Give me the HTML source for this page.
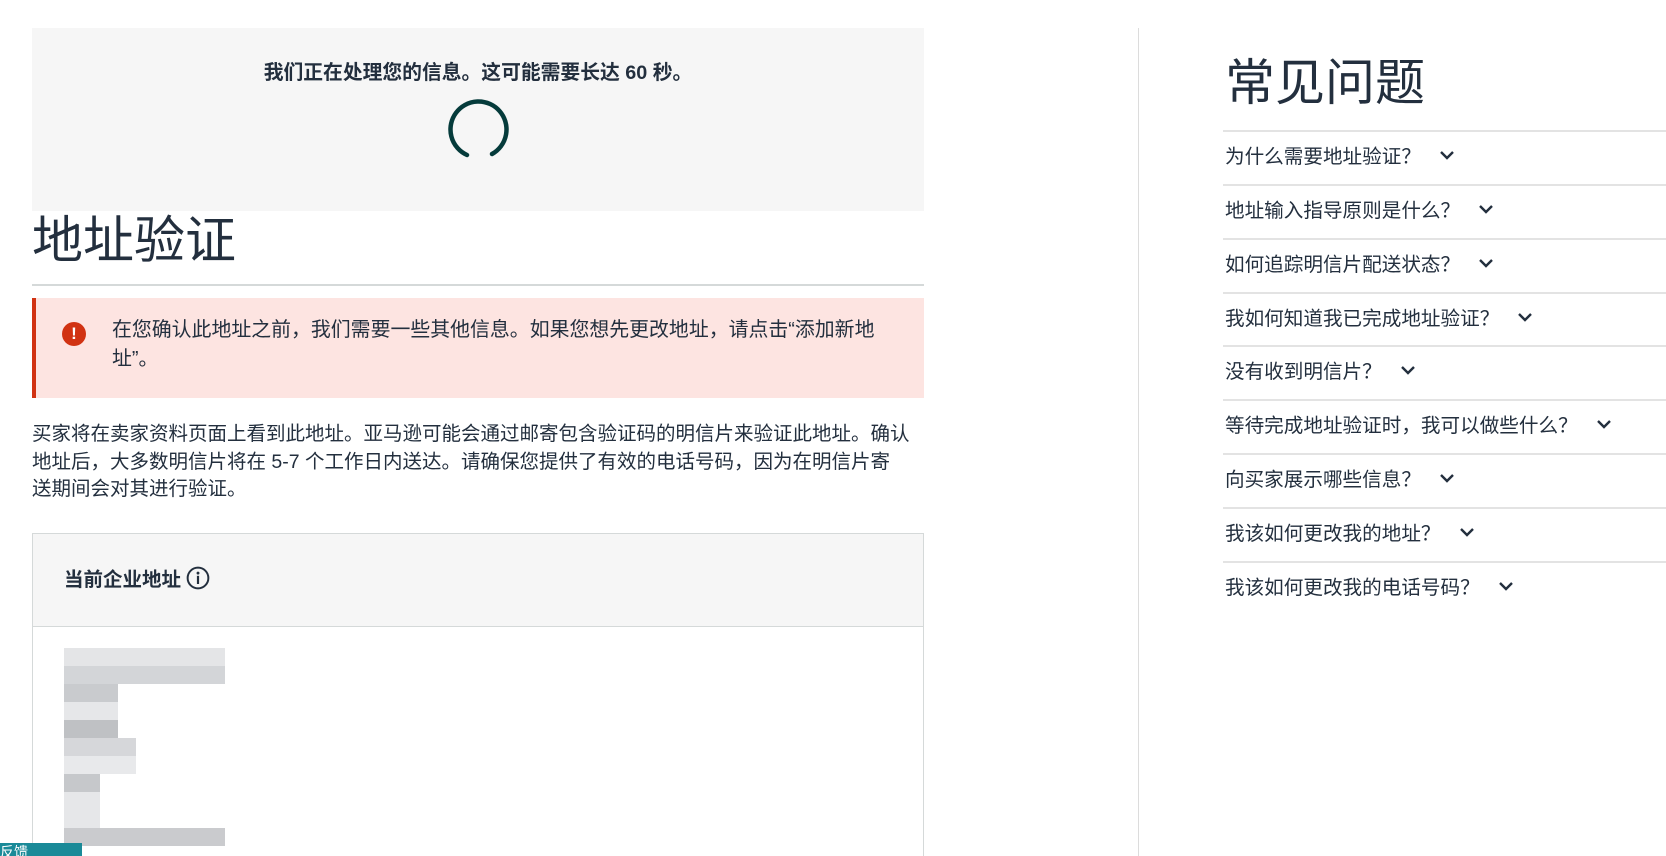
<!DOCTYPE html>
<html style="overflow:hidden;width:1666px;height:856px"><head><meta charset="utf-8"><style>
*{margin:0;padding:0;box-sizing:border-box}
body{width:1666px;height:856px;overflow:hidden;background:#fff;font-family:"Liberation Sans","Noto Sans CJK SC",sans-serif;color:#232f3e;position:relative}
.abs{position:absolute}
.load{left:32px;top:28px;width:892px;height:183px;background:#f6f6f6}
.load p{position:absolute;top:28px;width:100%;text-align:center;font-weight:bold;font-size:19.8px}
h1{position:absolute;left:32px;top:206px;font-size:51px;font-weight:normal;line-height:70px}
.hr{left:32px;top:284px;width:892px;height:2px;background:#d5d9d9}
.alert{left:32px;top:298px;width:892px;height:100px;background:#fde4e1;border-left:4px solid #d13212}
.alert .t{position:absolute;left:76px;top:18px;font-size:19.9px;line-height:29px;width:800px}
.ico{left:62px;top:322px;width:24px;height:24px;border-radius:50%;background:#d13212;color:#fff;font-weight:bold;font-size:17px;text-align:center;line-height:24px}
.para{left:32px;top:421px;width:900px;font-size:19.5px;line-height:27.5px;white-space:nowrap}
.card{left:32px;top:533px;width:892px;height:323px;border:1px solid #d5d9d9;border-bottom:none}
.card .hd{height:93px;background:#f6f6f6;border-bottom:1px solid #d5d9d9;padding:29px 0 0 31px;font-weight:bold;font-size:19.5px}
.vl{left:1138px;top:28px;width:1px;height:828px;background:#dcdcdc}
.faqh{left:1225px;top:48px;font-size:50px;line-height:70px}
.faq{left:1223px;width:443px;height:54px;border-top:2px solid #e3e3e3;font-size:19.6px;line-height:50px;padding-left:2px}
.faq svg{margin-left:18px;vertical-align:middle;position:relative;top:-3px}
.blk{position:absolute}
</style></head><body>
<div class="abs load"><p>我们正在处理您的信息。这可能需要长达 60 秒。</p>
<svg style="position:absolute;left:414px;top:70px" width="64" height="64" viewBox="0 0 64 64"><path d="M21 57 A28 28 0 1 1 46 56" fill="none" stroke="#053b3b" stroke-width="4.5" stroke-linecap="round"/></svg>
</div>
<h1>地址验证</h1>
<div class="abs hr"></div>
<div class="abs alert"><div class="t">在您确认此地址之前，我们需要一些其他信息。如果您想先更改地址，请点击“添加新地<br>址”。</div></div>
<div class="abs ico">!</div>
<div class="abs para">买家将在卖家资料页面上看到此地址。亚马逊可能会通过邮寄包含验证码的明信片来验证此地址。确认<br>地址后，大多数明信片将在 5-7 个工作日内送达。请确保您提供了有效的电话号码，因为在明信片寄<br>送期间会对其进行验证。</div>
<div class="abs card"><div class="hd">当前企业地址 <svg width="24" height="24" viewBox="0 0 22 22" style="vertical-align:-4px"><circle cx="11" cy="11" r="9.5" fill="none" stroke="#232f3e" stroke-width="1.8"/><circle cx="11" cy="6.5" r="1.3" fill="#232f3e"/><rect x="10" y="9" width="2" height="7.5" fill="#232f3e"/></svg></div></div>
<div class="blk" style="left:64px;top:648px;width:161px;height:18px;background:#e4e5e7"></div>
<div class="blk" style="left:64px;top:666px;width:161px;height:18px;background:#d3d5d8"></div>
<div class="blk" style="left:64px;top:684px;width:54px;height:18px;background:#c9cbce"></div>
<div class="blk" style="left:64px;top:702px;width:54px;height:18px;background:#e6e7e9"></div>
<div class="blk" style="left:64px;top:720px;width:54px;height:18px;background:#bfc1c4"></div>
<div class="blk" style="left:64px;top:738px;width:72px;height:18px;background:#d6d7da"></div>
<div class="blk" style="left:64px;top:756px;width:72px;height:18px;background:#e8e9eb"></div>
<div class="blk" style="left:64px;top:774px;width:36px;height:18px;background:#c6c8cb"></div>
<div class="blk" style="left:64px;top:792px;width:36px;height:36px;background:#e6e7e9"></div>
<div class="blk" style="left:64px;top:828px;width:161px;height:18px;background:#cacbce"></div>
<div class="blk" style="left:0;top:843px;width:82px;height:13px;background:#1a8a98;color:#fff;font-size:14px;line-height:18px;overflow:hidden">反馈</div>
<div class="abs vl"></div>
<div class="abs faqh">常见问题</div>
<div class="abs faq" style="top:130px">为什么需要地址验证？<svg width="16" height="10" viewBox="0 0 16 10"><path d="M2 2 L8 8 L14 2" fill="none" stroke="#232f3e" stroke-width="2.4"/></svg></div>
<div class="abs faq" style="top:184px">地址输入指导原则是什么？<svg width="16" height="10" viewBox="0 0 16 10"><path d="M2 2 L8 8 L14 2" fill="none" stroke="#232f3e" stroke-width="2.4"/></svg></div>
<div class="abs faq" style="top:238px">如何追踪明信片配送状态？<svg width="16" height="10" viewBox="0 0 16 10"><path d="M2 2 L8 8 L14 2" fill="none" stroke="#232f3e" stroke-width="2.4"/></svg></div>
<div class="abs faq" style="top:292px">我如何知道我已完成地址验证？<svg width="16" height="10" viewBox="0 0 16 10"><path d="M2 2 L8 8 L14 2" fill="none" stroke="#232f3e" stroke-width="2.4"/></svg></div>
<div class="abs faq" style="top:345px">没有收到明信片？<svg width="16" height="10" viewBox="0 0 16 10"><path d="M2 2 L8 8 L14 2" fill="none" stroke="#232f3e" stroke-width="2.4"/></svg></div>
<div class="abs faq" style="top:399px">等待完成地址验证时，我可以做些什么？<svg width="16" height="10" viewBox="0 0 16 10"><path d="M2 2 L8 8 L14 2" fill="none" stroke="#232f3e" stroke-width="2.4"/></svg></div>
<div class="abs faq" style="top:453px">向买家展示哪些信息？<svg width="16" height="10" viewBox="0 0 16 10"><path d="M2 2 L8 8 L14 2" fill="none" stroke="#232f3e" stroke-width="2.4"/></svg></div>
<div class="abs faq" style="top:507px">我该如何更改我的地址？<svg width="16" height="10" viewBox="0 0 16 10"><path d="M2 2 L8 8 L14 2" fill="none" stroke="#232f3e" stroke-width="2.4"/></svg></div>
<div class="abs faq" style="top:561px">我该如何更改我的电话号码？<svg width="16" height="10" viewBox="0 0 16 10"><path d="M2 2 L8 8 L14 2" fill="none" stroke="#232f3e" stroke-width="2.4"/></svg></div>
</body></html>
